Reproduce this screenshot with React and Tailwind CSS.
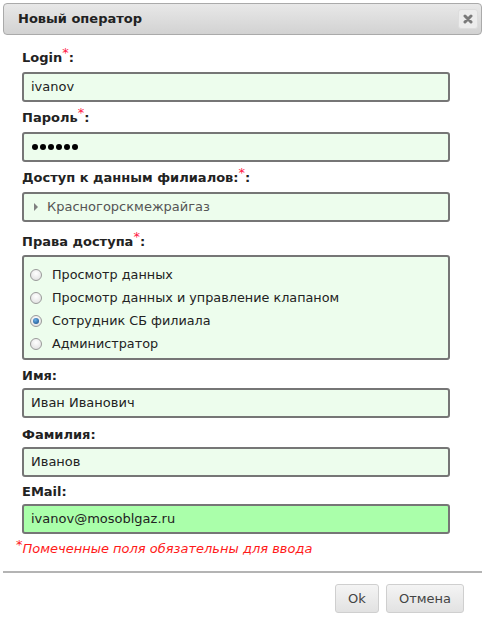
import React from "react";

const font = { fontFamily: '"DejaVu Sans", Verdana, sans-serif' };

function Star() {
  return <span className="relative -top-[5px] text-[#ff1744] font-normal text-[13px]">*</span>;
}

function Label({ children, star }) {
  return (
    <div className="h-[16px] leading-[16px] text-[13px] font-bold text-[#222] ml-[22px]">
      {children}
      {star && <Star />}
      {star && ":"}
    </div>
  );
}

function Input({ children, green, className = "" }) {
  return (
    <div
      className={`ml-[22px] w-[428px] h-[30px] border-2 border-[#767676] rounded-[3px] flex items-center pl-[7px] text-[13px] text-[#222] ${
        green ? "bg-[#aaffaa]" : "bg-[#edfded]"
      } ${className}`}
    >
      {children}
    </div>
  );
}

function Radio({ checked, label }) {
  return (
    <div className="flex items-center h-[23px]">
      <span
        className="w-[12px] h-[12px] rounded-full border border-[#9a9a9a] flex items-center justify-center"
        style={{ background: "radial-gradient(circle at 50% 35%, #ffffff 0%, #dcdcdc 100%)" }}
      >
        {checked && (
          <span
            className="w-[6px] h-[6px] rounded-full"
            style={{ background: "radial-gradient(circle at 40% 35%, #6ab0e8 0%, #1a4f8a 90%)" }}
          />
        )}
      </span>
      <span className="ml-[10px] text-[12.8px] text-[#222]">{label}</span>
    </div>
  );
}

export default function App() {
  return (
    <div className="w-[485px] h-[628px] bg-white relative" style={font}>
      <div className="pt-[3px] px-[3px]">
        <div
          className="h-[32px] border border-[#aaaaaa] rounded-[4px] flex items-center justify-between pl-[14px] pr-[3px]"
          style={{ background: "linear-gradient(#e8e8e8, #d2d2d2)" }}
        >
          <span className="text-[13px] font-bold text-[#222]">Новый оператор</span>
          <span className="w-[20px] h-[20px] rounded-[3px] border border-[#dddddd] bg-[#ececec] flex items-center justify-center">
            <svg width="10" height="10" viewBox="0 0 10 10">
              <path d="M2 2 L8 8 M8 2 L2 8" stroke="#7a7a7a" strokeWidth="3" strokeLinecap="round" />
            </svg>
          </span>
        </div>
      </div>

      <div className="pt-[15px]">
        <Label star>Login</Label>
        <Input className="mt-[6px]">ivanov</Input>
        <div className="mt-[8px]">
          <Label star>Пароль</Label>
        </div>
        <Input className="mt-[6px]">
          <div className="flex gap-[2px] ml-[1px]">
            {[0, 1, 2, 3, 4, 5].map((i) => (
              <span key={i} className="w-[6px] h-[6px] rounded-full bg-black" />
            ))}
          </div>
        </Input>
        <div className="mt-[8px]">
          <Label star>Доступ к данным филиалов:</Label>
        </div>
        <Input className="mt-[6px]">
          <svg width="6" height="8" viewBox="0 0 6 8" className="ml-[2px] mr-[8px]">
            <path d="M1 0 L5 4 L1 8 Z" fill="#808080" />
          </svg>
          <span className="text-[#555]">Красногорскмежрайгаз</span>
        </Input>
        <div className="mt-[12px]">
          <Label star>Права доступа</Label>
        </div>
        <div className="mt-[5px] ml-[22px] w-[428px] h-[105px] border-2 border-[#767676] rounded-[3px] bg-[#edfded] pl-[6px] pt-[6px]">
          <Radio label="Просмотр данных" />
          <Radio label="Просмотр данных и управление клапаном" />
          <Radio checked label="Сотрудник СБ филиала" />
          <Radio label="Администратор" />
        </div>
        <div className="mt-[8px]">
          <Label>Имя:</Label>
        </div>
        <Input className="mt-[4px]">Иван Иванович</Input>
        <div className="mt-[9px]">
          <Label>Фамилия:</Label>
        </div>
        <Input className="mt-[4px]">Иванов</Input>
        <div className="mt-[7px]">
          <Label>EMail:</Label>
        </div>
        <Input green className="mt-[4px]">ivanov@mosoblgaz.ru</Input>
        <div className="mt-[7px] ml-[16px] text-[13px] italic text-[#ff1a1a] leading-[16px]">
          <span className="relative -top-[4px] not-italic">*</span>Помеченные поля обязательны для ввода
        </div>
        <div className="mt-[14px] mx-[3px] h-[2px] bg-[#b4b4b4]" />
        <div className="flex justify-end gap-[7px] pr-[21px] mt-[11px]">
          <button
            className="w-[44px] h-[29px] border border-[#cfcfcf] rounded-[3px] text-[13px] text-[#444]"
            style={{ background: "linear-gradient(#f4f4f4, #e2e2e2)" }}
          >
            Ok
          </button>
          <button
            className="w-[78px] h-[29px] border border-[#cfcfcf] rounded-[3px] text-[13px] text-[#444]"
            style={{ background: "linear-gradient(#f4f4f4, #e2e2e2)" }}
          >
            Отмена
          </button>
        </div>
      </div>
    </div>
  );
}
